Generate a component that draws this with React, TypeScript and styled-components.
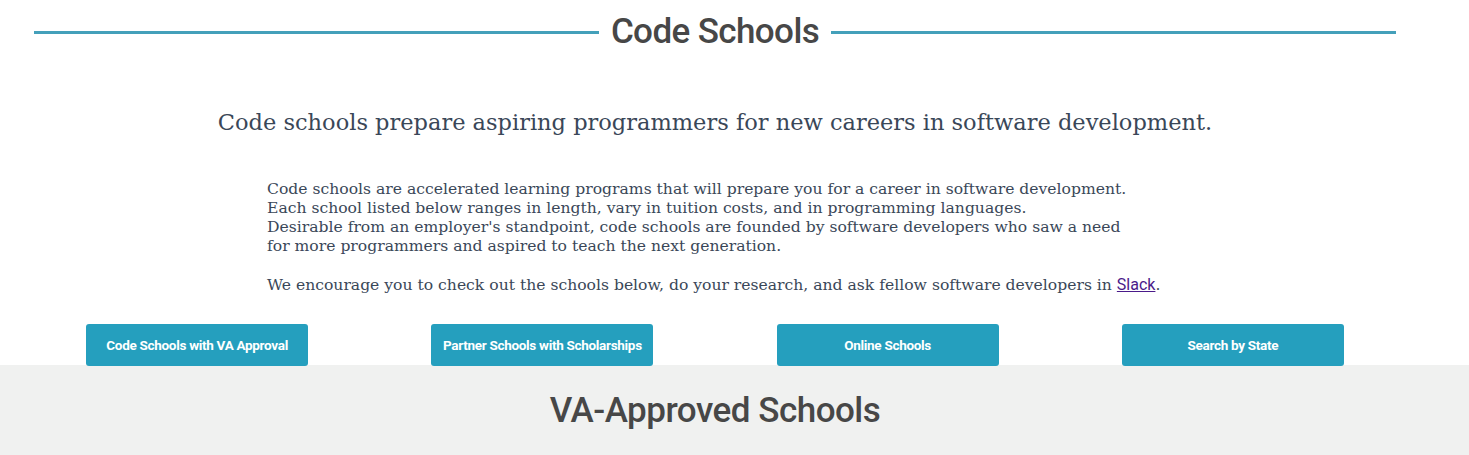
import React from 'react';
import styled, { createGlobalStyle } from 'styled-components';

const GlobalStyle = createGlobalStyle`
  html, body {
    margin: 0;
    padding: 0;
    background: #ffffff;
  }
  body {
    font-family: "DejaVu Serif", serif;
    color: #3a4758;
  }
`;

const headingFont = `"Roboto", "DejaVu Sans Condensed", sans-serif`;

const buttons = [
  'Code Schools with VA Approval',
  'Partner Schools with Scholarships',
  'Online Schools',
  'Search by State',
];

export default function App() {
  return (
    <>
      <GlobalStyle />
      <Page>
        <Intro>
          <TitleRow>
            <Rule />
            <Title>Code Schools</Title>
            <Rule />
          </TitleRow>
          <Lead>Code schools prepare aspiring programmers for new careers in software development.</Lead>
          <Body>
            <p>
              Code schools are accelerated learning programs that will prepare you for a career in software development.
              <br />
              Each school listed below ranges in length, vary in tuition costs, and in programming languages.
              <br />
              Desirable from an employer's standpoint, code schools are founded by software developers who saw a need
              <br />
              for more programmers and aspired to teach the next generation.
            </p>
            <p>
              We encourage you to check out the schools below, do your research, and ask fellow software developers in{' '}
              <SlackLink href="#slack">Slack</SlackLink>.
            </p>
          </Body>
          <ButtonGrid>
            {buttons.map((label) => (
              <Cell key={label}>
                <JumpButton>{label}</JumpButton>
              </Cell>
            ))}
          </ButtonGrid>
        </Intro>
      </Page>
      <GraySection>
        <Page>
          <SectionTitle>VA-Approved Schools</SectionTitle>
        </Page>
      </GraySection>
    </>
  );
}

const Page = styled.div`
  width: 1430px;
`;

const Intro = styled.section`
  display: flex;
  flex-direction: column;
  align-items: center;
`;

const TitleRow = styled.div`
  width: 1362px;
  height: 64px;
  display: flex;
  align-items: center;
  gap: 12px;
`;

const Rule = styled.div`
  flex: 1;
  height: 3px;
  background: #44a0ba;
`;

const Title = styled.h1`
  margin: 0;
  font-family: ${headingFont};
  font-weight: 500;
  font-size: 35px;
  letter-spacing: -0.6px;
  line-height: 1;
  color: #474747;
  transform: translateY(-1px);
`;

const Lead = styled.h2`
  margin: 42px 0 0;
  font-weight: 400;
  font-size: 22.5px;
  line-height: 32px;
  color: #3a4758;
  text-align: center;
`;

const Body = styled.div`
  width: 896px;
  margin-top: 42px;
  font-size: 15.6px;
  line-height: 19px;

  p {
    margin: 0 0 19px;
  }
  p:last-child {
    margin-bottom: 0;
  }
`;

const SlackLink = styled.a`
  font-family: ${headingFont};
  font-size: 16px;
  color: #4a1a8a;
  text-decoration: underline;
`;

const ButtonGrid = styled.div`
  width: 1381px;
  margin-top: 29px;
  display: grid;
  grid-template-columns: repeat(4, 1fr);
`;

const Cell = styled.div`
  display: flex;
  justify-content: center;
`;

const JumpButton = styled.button`
  width: 222px;
  height: 42px;
  border: none;
  border-radius: 3px;
  background: #259fbe;
  color: #ffffff;
  font-family: ${headingFont};
  font-weight: 700;
  font-size: 13.5px;
  letter-spacing: -0.3px;
  white-space: nowrap;
  cursor: pointer;
`;

const GraySection = styled.section`
  background: #f0f1f0;
  height: 200px;
  margin-top: -1px;
`;

const SectionTitle = styled.h2`
  margin: 0;
  padding-top: 26px;
  text-align: center;
  font-family: ${headingFont};
  font-weight: 500;
  font-size: 35px;
  letter-spacing: -0.5px;
  line-height: 40px;
  color: #474747;
`;
